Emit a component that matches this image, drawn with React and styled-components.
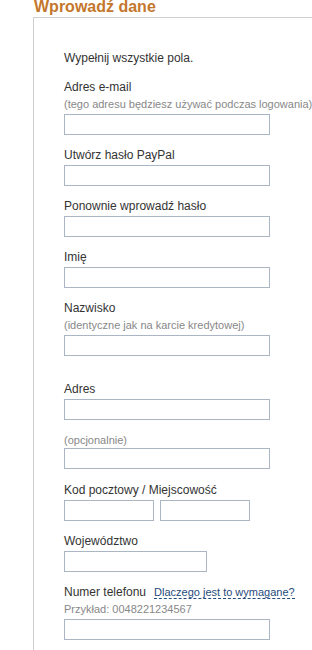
import React from "react";
import styled, { createGlobalStyle } from "styled-components";

const Global = createGlobalStyle`
  html, body { margin: 0; padding: 0; background: #fff; overflow: hidden; }
  body { font-family: "Liberation Sans", Arial, sans-serif; }
`;

const Page = styled.div`
  padding-left: 33px;
  width: 340px;
`;

const Title = styled.h2`
  margin: 0 0 3px 1px;
  font-size: 16px;
  line-height: 14px;
  font-weight: bold;
  color: #c4772c;
  white-space: nowrap;
`;

const Panel = styled.div`
  border-top: 1px solid #cfcfcf;
  border-left: 1px solid #cfcfcf;
  padding: 33px 0 20px 30px;
  min-height: 700px;
`;

const Intro = styled.p`
  margin: 0;
  font-size: 12px;
  line-height: 15px;
  color: #333;
`;

const Field = styled.div`
  margin-top: ${(p) => p.$gap}px;
`;

const Label = styled.div`
  font-size: 12px;
  line-height: 15px;
  color: #333;
  margin-bottom: 2px;
  white-space: nowrap;
`;

const Hint = styled.div`
  font-size: 11px;
  line-height: 15px;
  color: #888;
  margin-bottom: ${(p) => (p.$tight ? 0 : 2)}px;
  white-space: nowrap;
`;

const Input = styled.input`
  display: block;
  box-sizing: border-box;
  width: ${(p) => p.$w || 206}px;
  height: 21px;
  margin: 0;
  padding: 0 3px;
  border: 1px solid #aab6c3;
  background: #fff;
  font: 12px "Liberation Sans", Arial, sans-serif;
  outline: none;
`;

const Pair = styled.div`
  display: flex;
  gap: 6px;
`;

const HelpLink = styled.a`
  margin-left: 8px;
  font-size: 11px;
  color: #264a7c;
  text-decoration: none;
  border-bottom: 1px dashed #264a7c;
  cursor: pointer;
`;

export default function App() {
  return (
    <>
      <Global />
      <Page>
        <Title>Wprowadź dane</Title>
        <Panel>
          <Intro>Wypełnij wszystkie pola.</Intro>

          <Field $gap={14}>
            <Label>Adres e-mail</Label>
            <Hint>(tego adresu będziesz używać podczas logowania)</Hint>
            <Input type="text" />
          </Field>

          <Field $gap={13}>
            <Label>Utwórz hasło PayPal</Label>
            <Input type="password" />
          </Field>

          <Field $gap={13}>
            <Label>Ponownie wprowadź hasło</Label>
            <Input type="password" />
          </Field>

          <Field $gap={13}>
            <Label>Imię</Label>
            <Input type="text" />
          </Field>

          <Field $gap={13}>
            <Label>Nazwisko</Label>
            <Hint>(identyczne jak na karcie kredytowej)</Hint>
            <Input type="text" />
          </Field>

          <Field $gap={26}>
            <Label>Adres</Label>
            <Input type="text" />
          </Field>

          <Field $gap={13}>
            <Hint $tight>(opcjonalnie)</Hint>
            <Input type="text" />
          </Field>

          <Field $gap={14}>
            <Label>Kod pocztowy / Miejscowość</Label>
            <Pair>
              <Input type="text" $w={90} />
              <Input type="text" $w={90} />
            </Pair>
          </Field>

          <Field $gap={13}>
            <Label>Województwo</Label>
            <Input type="text" $w={143} />
          </Field>

          <Field $gap={13}>
            <Label>
              Numer telefonu<HelpLink>Dlaczego jest to wymagane?</HelpLink>
            </Label>
            <Hint>Przykład: 0048221234567</Hint>
            <Input type="text" />
          </Field>
        </Panel>
      </Page>
    </>
  );
}
